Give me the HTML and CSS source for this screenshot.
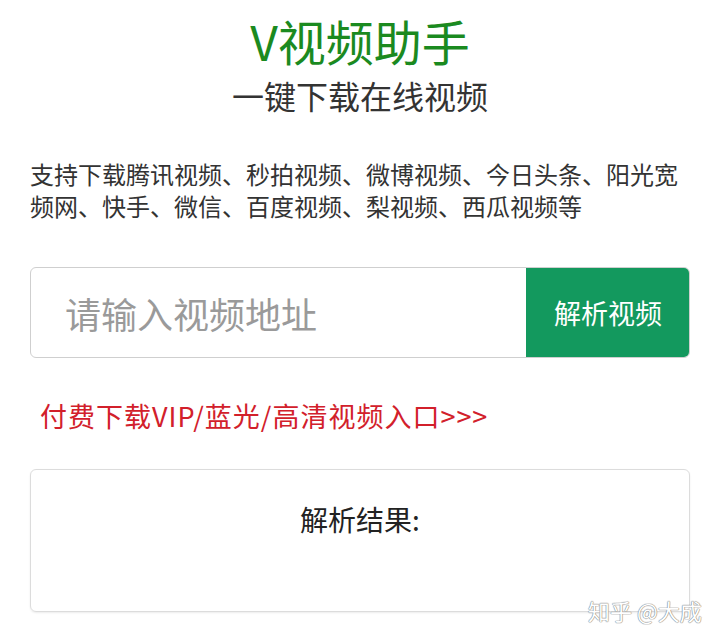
FILE: index.html
```html
<!DOCTYPE html>
<html lang="zh-CN">
<head>
<meta charset="utf-8">
<title>V视频助手</title>
<link rel="stylesheet" href="styles.css">
</head>
<body>
<div class="page">
  <h1 class="title">V视频助手</h1>
  <h2 class="subtitle">一键下载在线视频</h2>
  <p class="desc">支持下载腾讯视频、秒拍视频、微博视频、今日头条、阳光宽频网、快手、微信、百度视频、梨视频、西瓜视频等</p>
  <div class="search">
    <div class="input">请输入视频地址</div>
    <div class="btn">解析视频</div>
  </div>
  <a class="vip">付费下载VIP/蓝光/高清视频入口&gt;&gt;&gt;</a>
  <div class="result">
    <div class="result-title">解析结果:</div>
  </div>
</div>
<div class="watermark">知乎 @大成</div>
</body>
</html>
```

FILE: styles.css
```css
html, body {
  margin: 0;
  padding: 0;
  background: #fff;
}
body {
  font-family: "Noto Sans CJK SC", "Noto Sans", sans-serif;
  width: 720px;
  height: 643px;
  overflow: hidden;
  position: relative;
}
.page {
  padding: 0 30px;
  display: flex;
  flex-direction: column;
}
.title {
  margin: 11px 0 0;
  font-size: 48px;
  line-height: 58px;
  font-weight: 400;
  color: #1b8a1f;
  text-align: center;
}
.subtitle {
  margin: 6px 0 0;
  font-size: 32px;
  line-height: 40px;
  font-weight: 400;
  color: #333;
  text-align: center;
}
.desc {
  margin: 43px 0 0;
  font-size: 24px;
  line-height: 32px;
  color: #333;
}
.search {
  margin-top: 45px;
  height: 91px;
  display: flex;
  border: 1px solid #cfcfcf;
  border-radius: 6px;
  box-sizing: border-box;
  overflow: hidden;
}
.input {
  flex: 1;
  display: flex;
  align-items: center;
  padding-left: 34px;
  font-size: 36px;
  color: #9a9a9a;
}
.btn {
  width: 164px;
  margin: -1px -1px -1px 0;
  background: #13995e;
  color: #fff;
  font-size: 27px;
  display: flex;
  align-items: center;
  justify-content: center;
}
.vip {
  margin: 40px 0 0 10px;
  font-size: 27px;
  line-height: 36px;
  letter-spacing: 1px;
  color: #d2202b;
}
.result {
  margin-top: 35px;
  height: 143px;
  border: 1px solid #dcdcdc;
  border-radius: 6px;
  box-shadow: 0 1px 2px rgba(0,0,0,0.08);
  box-sizing: border-box;
  display: flex;
  justify-content: center;
}
.result-title {
  margin-top: 31px;
  font-size: 28px;
  line-height: 36px;
  color: #222;
}
.watermark {
  position: absolute;
  left: 588px;
  top: 595px;
  font-size: 22px;
  line-height: 30px;
  color: #fff;
  text-shadow: 0 0 1px #888, 0 0 1px #888, 0 0 1px #888;
}
```
